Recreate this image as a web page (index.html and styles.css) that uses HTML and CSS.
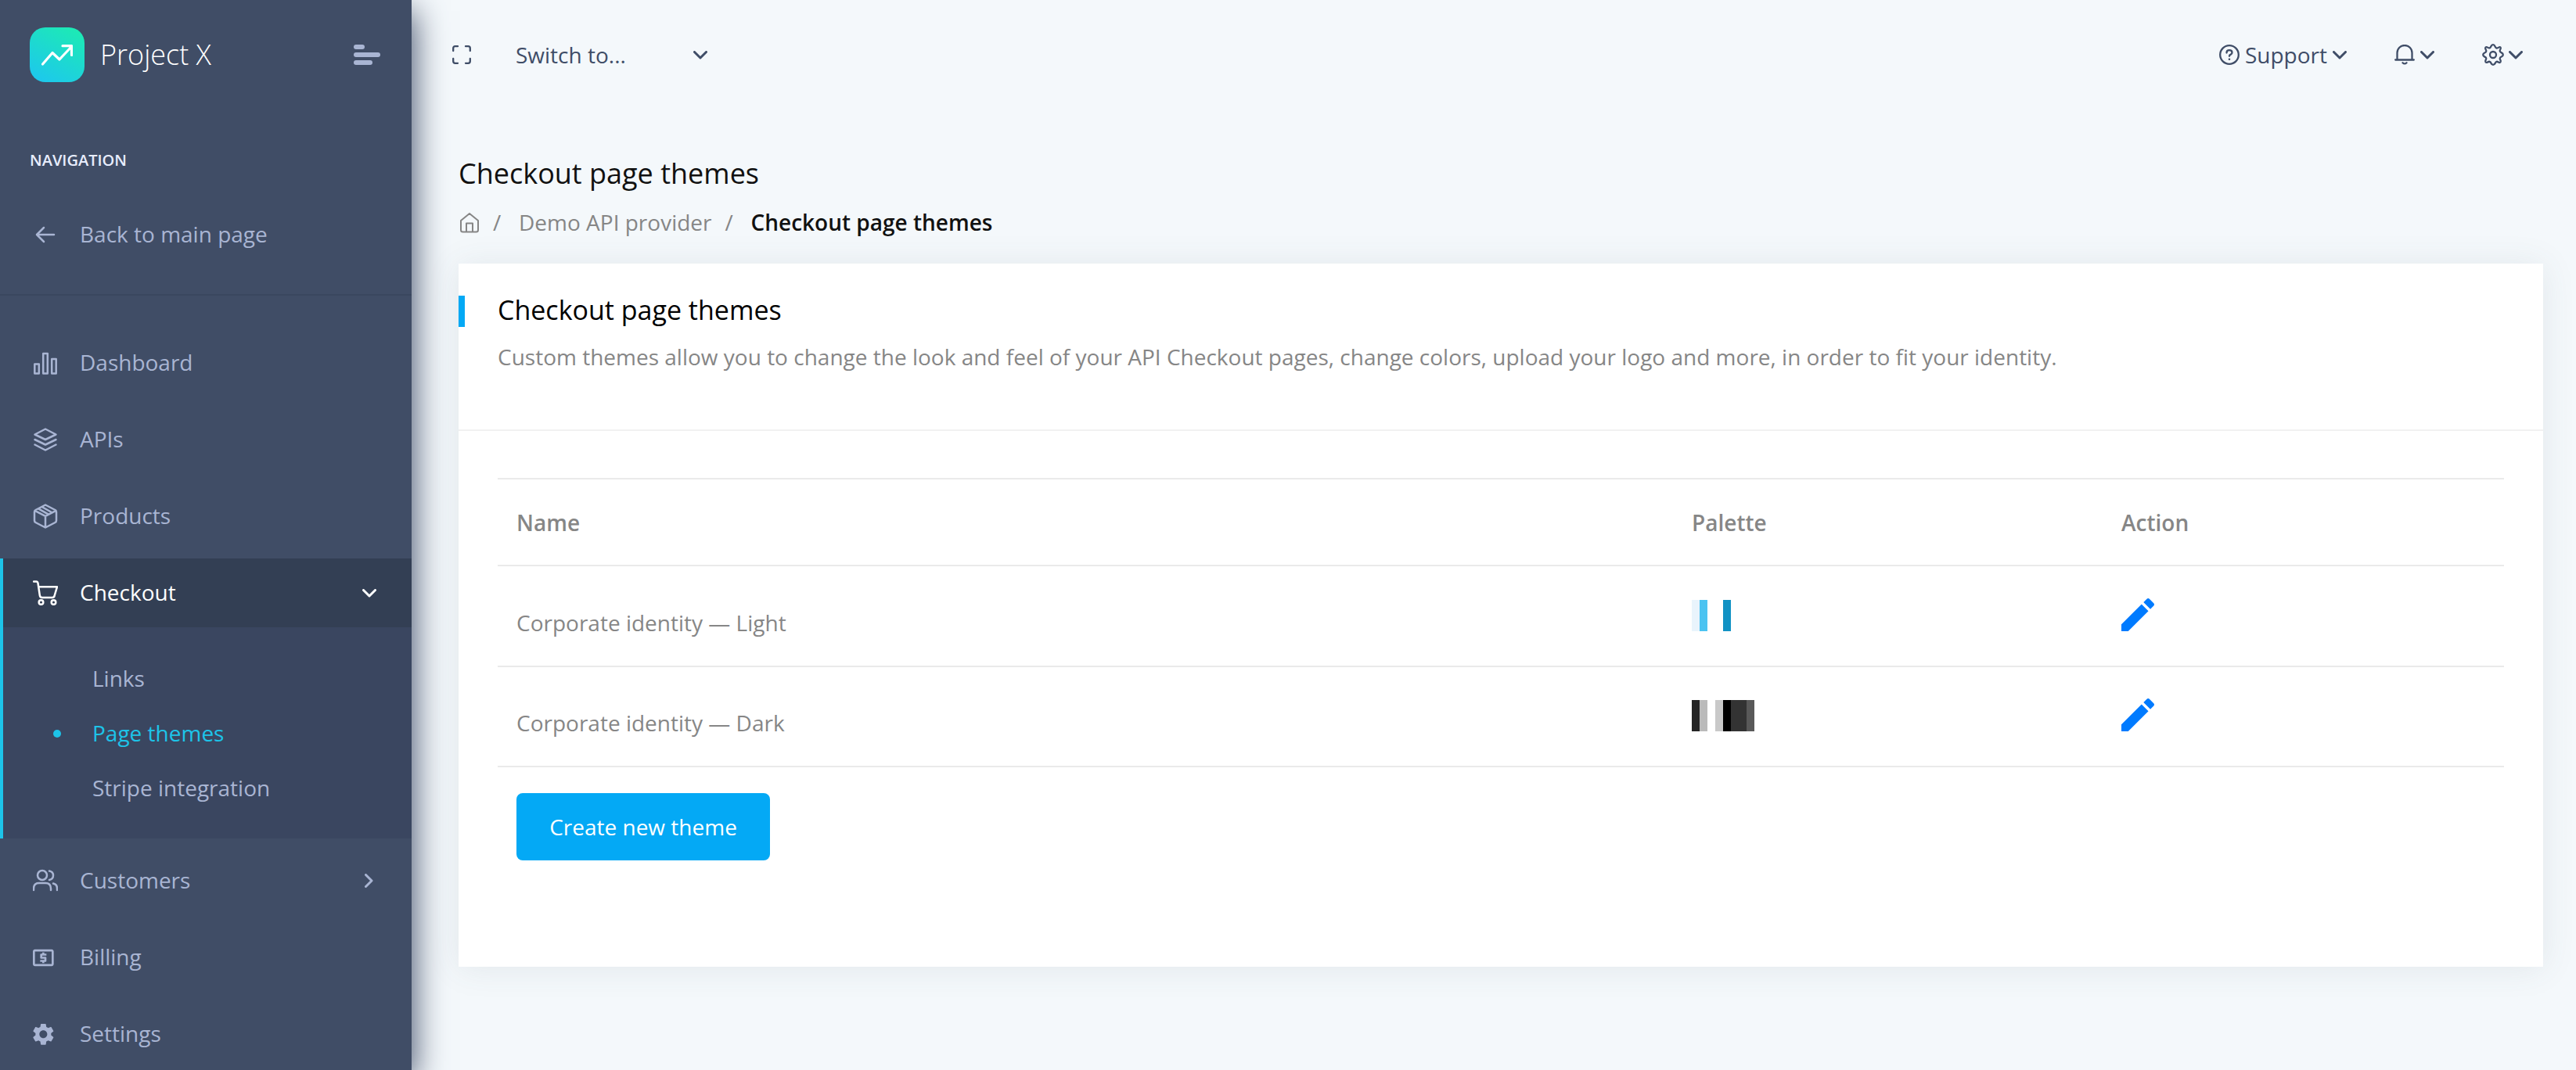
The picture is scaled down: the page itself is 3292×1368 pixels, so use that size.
FILE: index.html
```html
<!DOCTYPE html>
<html lang="en">
<head>
<meta charset="utf-8">
<title>Checkout page themes</title>
<link rel="stylesheet" href="styles.css">
</head>
<body>
<div class="app">
  <aside class="sidebar">
    <div class="brand">
      <span class="logo"><svg width="40" height="27" viewBox="0 0 40 27"><path d="M1.5 25 14 10.500l9 8.500L38 3M27 1.700h11.500V13.500" /></svg></span>
      <span class="brand-name">Project X</span>
      <span class="burger"><i></i><i></i><i></i></span>
    </div>
    <div class="nav-title">NAVIGATION</div>
    <a class="item back"><span class="ico"><svg width="32" height="32" viewBox="0 0 32 32"><path d="M5 16h22M14 7l-9 9 9 9"/></svg></span><span class="label">Back to main page</span></a>
    <nav class="menu">
      <a class="item"><span class="ico"><svg width="32" height="32" viewBox="0 0 32 32"><path d="M2.300 17.500h5.500v12H2.300zM13.200 4h5.600v25.500h-5.600zM24.200 11h5.500v18.500h-5.500z"/></svg></span><span class="label">Dashboard</span></a>
      <a class="item"><span class="ico"><svg width="32" height="32" viewBox="0 0 32 32"><path d="M16 2.500 29.500 9.500 16 16 2.500 9.500zM2.500 16 16 22.500 29.500 16M2.500 22.500 16 29.500l13.500-7"/></svg></span><span class="label">APIs</span></a>
      <a class="item"><span class="ico"><svg width="32" height="32" viewBox="0 0 32 32"><path d="M16 1.500 28.500 8q1.500.8 1.500 2.500v11q0 1.700-1.500 2.500L16 30.500 3.500 24Q2 23.200 2 21.500v-11Q2 8.800 3.500 8zM2.500 8.800 16 15.800l13.500-7M16 15.800v14.500M7 6.300l12.500 7M11.500 4l12.500 7"/></svg></span><span class="label">Products</span></a>
      <div class="group">
        <a class="item active"><span class="ico"><svg width="32" height="32" viewBox="0 0 32 32"><path d="M1 1.500h3.500q1.500 0 2 2l2.300 15.500q.4 3 3 3h13q2.600 0 3-3L31 8.300H7.300"/><circle cx="10.500" cy="28" r="2.800"/><circle cx="26.500" cy="28" r="2.800"/></svg></span><span class="label">Checkout</span><svg class="chev" width="18" height="11" viewBox="0 0 18 11"><path d="M1.500 1.500 9 9l7.500-7.500"/></svg></a>
        <div class="sub">
          <a class="subitem">Links</a>
          <a class="subitem current">Page themes</a>
          <a class="subitem">Stripe integration</a>
        </div>
      </div>
      <a class="item"><span class="ico"><svg width="32" height="32" viewBox="0 0 32 32"><circle cx="12" cy="9" r="6"/><path d="M1 28v-2q0-7 7-7h8q7 0 7 7v2M21 3.500q5 1 5 5.700T21 15M26 19.500q5 1 5 6.500v2"/></svg></span><span class="label">Customers</span><svg class="chev side" width="11" height="18" viewBox="0 0 11 18"><path d="M1.500 1.500 9 9l-7.500 7.500"/></svg></a>
      <a class="item"><span class="ico"><svg class="solid" width="32" height="32" viewBox="2 -.35 24 24"><path d="M11 17h2v-1h1c.55 0 1-.45 1-1v-3c0-.55-.45-1-1-1h-3v-1h4V8h-2V7h-2v1h-1c-.55 0-1 .45-1 1v3c0 .55.45 1 1 1h3v1H9v2h2v1zm9-13H4c-1.110 0-1.990.89-1.990 2L2 18c0 1.110.89 2 2 2h16c1.110 0 2-.89 2-2V6c0-1.110-.89-2-2-2zm0 14H4V6h16v12z"/></svg></span><span class="label">Billing</span></a>
      <a class="item"><span class="ico"><svg class="solid" width="32" height="32" viewBox="2.400 .3 23 23"><path d="M19.140 12.940c.04-.3.060-.61.060-.94 0-.32-.02-.64-.07-.94l2.030-1.580c.18-.14.230-.41.120-.61l-1.920-3.320c-.12-.22-.37-.29-.59-.22l-2.390.96c-.5-.38-1.030-.7-1.620-.94l-.36-2.540c-.04-.24-.24-.41-.48-.41h-3.840c-.24 0-.43.17-.47.41l-.36 2.540c-.59.24-1.130.57-1.620.94l-2.390-.96c-.22-.08-.47 0-.59.22L2.740 8.870c-.12.210-.08.470.12.610l2.030 1.580c-.05.3-.09.63-.09.940s.02.64.07.940l-2.030 1.580c-.18.14-.23.41-.12.610l1.920 3.320c.12.220.37.290.59.220l2.390-.96c.5.380 1.030.7 1.620.940l.36 2.540c.05.240.24.410.48.410h3.840c.24 0 .44-.17.470-.41l.36-2.540c.59-.24 1.130-.56 1.620-.94l2.390.96c.22.080.47 0 .59-.22l1.920-3.320c.12-.22.070-.47-.12-.61l-2.010-1.580zM12 15.600c-1.980 0-3.600-1.620-3.600-3.600s1.620-3.600 3.600-3.600 3.600 1.620 3.600 3.600-1.620 3.600-3.600 3.600z"/></svg></span><span class="label">Settings</span></a>
    </nav>
  </aside>
  <div class="page">
    <header class="topbar">
      <svg class="expand" width="24" height="24" viewBox="0 0 24 24"><path d="M1.200 7V3.700Q1.200 1.200 3.700 1.200H7M17 1.200h3.300q2.500 0 2.500 2.500V7M22.800 17v3.300q0 2.500-2.500 2.500H17M7 22.800H3.700q-2.500 0-2.500-2.500V17"/></svg>
      <span class="switch">Switch to...</span>
      <svg class="chev" width="18" height="11" viewBox="0 0 18 11"><path d="M1.500 1.500 9 9l7.500-7.500"/></svg>
      <div class="tools">
        <span class="tool"><svg class="help" width="26" height="26" viewBox="0 0 26 26"><circle cx="13" cy="13" r="11.800"/><path d="M9.500 10.500q0-3.300 3.500-3.300t3.500 3q0 1.600-1.700 2.400-1.800.8-1.800 2.200"/><circle class="dot" cx="13" cy="18.800" r="1.300"/></svg><span class="tool-text">Support</span><svg class="chev" width="18" height="11" viewBox="0 0 18 11"><path d="M1.500 1.500 9 9l7.500-7.500"/></svg></span>
        <span class="tool alerts"><svg class="bell" width="26" height="26" viewBox="0 0 26 26"><path d="M1.200 19.500h23.600M3.500 19.500V10.500a9.500 9.500 0 0 1 19 0v9M10.500 23.200q2.500 2.500 5 0"/></svg><svg class="chev" width="18" height="11" viewBox="0 0 18 11"><path d="M1.500 1.500 9 9l7.500-7.500"/></svg></span>
        <span class="tool prefs"><svg class="gear" width="28" height="28" viewBox="0 0 28 28"><path d="M14 1.200c3 0 2 3.800 4.500 4.300S22 2.800 23.500 4.500 22 7.500 22.800 9.700s4 1.300 4 4.300-3.300 2-4 4.300 2.400 3.500.7 5.200-3-1.200-5-.7-1.500 4-4.500 4-2-3.400-4.300-4-3.500 2.400-5.200.7 1.300-3 .7-5.200-4-1.300-4-4.300 3.400-2 4-4.300-2.400-3.500-.7-5.200 3 1.500 5.200.8S11 1.200 14 1.200z"/><circle cx="14" cy="14" r="4"/></svg><svg class="chev" width="18" height="11" viewBox="0 0 18 11"><path d="M1.500 1.500 9 9l7.500-7.500"/></svg></span>
      </div>
    </header>
    <main class="content">
      <h1 class="title">Checkout page themes</h1>
      <div class="crumbs">
        <svg class="home" width="26" height="27" viewBox="0 0 26 27"><path d="M2 11 13 2l11 9v12q0 2.500-2.500 2.500h-17Q2 25.500 2 23zM9 25.500V14.500h8v11"/></svg>
        <span class="slash">/</span><span class="crumb">Demo API provider</span><span class="slash">/</span><span class="here">Checkout page themes</span>
      </div>
      <section class="card">
        <div class="card-head">
          <h2 class="card-title">Checkout page themes</h2>
          <p class="card-text">Custom themes allow you to change the look and feel of your API Checkout pages, change colors, upload your logo and more, in order to fit your identity.</p>
        </div>
        <div class="table">
          <div class="row head"><span>Name</span><span>Palette</span><span>Action</span></div>
          <div class="row">
            <span class="name">Corporate identity — Light</span>
            <span class="palette"><i class="l1"></i><i class="l2"></i><i class="l3"></i><i class="l3"></i><i class="l4"></i></span>
            <svg class="pencil" width="42" height="42" viewBox="3 3 18 18"><path d="M3 17.250V21h3.750L17.810 9.940l-3.750-3.750L3 17.250zM20.710 7.040c.39-.39.39-1.020 0-1.410l-2.340-2.340c-.39-.39-1.020-.39-1.410 0l-1.830 1.830 3.750 3.750 1.830-1.830z"/></svg>
          </div>
          <div class="row">
            <span class="name">Corporate identity — Dark</span>
            <span class="palette"><i class="d1"></i><i class="d2"></i><i class="l3"></i><i class="d3"></i><i class="d4"></i><i class="d5"></i><i class="d5"></i><i class="d6"></i></span>
            <svg class="pencil" width="42" height="42" viewBox="3 3 18 18"><path d="M3 17.250V21h3.750L17.810 9.940l-3.750-3.750L3 17.250zM20.710 7.040c.39-.39.39-1.020 0-1.410l-2.340-2.340c-.39-.39-1.020-.39-1.410 0l-1.830 1.830 3.750 3.750 1.830-1.830z"/></svg>
          </div>
        </div>
        <button class="create">Create new theme</button>
      </section>
    </main>
  </div>
</div>
</body>
</html>
```
FILE: styles.css
```css
* { box-sizing: border-box; }
body { margin: 0; background: #f4f8fb; font-family: "Open Sans", "Noto Sans", sans-serif; font-size: 28px; color: #868686; }
h1, h2, p { margin: 0; font-weight: 400; }
svg { display: block; flex: none; fill: none; stroke: currentColor; stroke-width: 2.5; stroke-linecap: round; stroke-linejoin: round; }
.app { display: flex; height: 1368px; overflow: hidden; }

.sidebar { width: 526px; flex: none; background: #404d66; color: #a9b5d3; box-shadow: 2px 14px 40px 0 #3f4d67; position: relative; z-index: 1; }
.brand { display: flex; align-items: center; height: 140px; padding: 0 40px 0 38px; }
.logo { width: 70px; height: 70px; border-radius: 20px; background: linear-gradient(30deg, #1dc9eb 10%, #1de9b6 90%); display: flex; align-items: center; justify-content: center; color: #fff; }
.logo svg { stroke-width: 3.2; }
.brand-name { margin-left: 20px; font-size: 36px; font-weight: 300; color: #fff; line-height: 50px; }
.burger { margin-left: auto; width: 34px; display: grid; gap: 4px; }
.burger i { height: 6px; border-radius: 3px; background: #a9b5d3; }
.burger i:first-child { width: 14px; }
.burger i:last-child { width: 24px; }
.nav-title { height: 116px; padding: 51px 38px 0; font-size: 20px; font-weight: 600; line-height: 28px; color: #e8edfd; }
.item { display: flex; align-items: center; height: 88px; margin-bottom: 10px; padding-left: 42px; }
.item .ico { width: 60px; flex: none; }
.label { padding-bottom: 2px; }
.item .chev { margin-left: auto; margin-right: 45px; stroke-width: 3; }
.item .side { margin-right: 49px; }
.item .solid, .pencil { fill: currentColor; stroke: none; }
.back { margin-bottom: 32px; }
.menu { border-top: 2px solid #3a475f; padding-top: 42px; }
.group { border-left: 4px solid #1dc4e9; margin-bottom: 10px; background: #3a4660; }
.group .item { padding-left: 38px; margin: 0; }
.active { background: #333f54; color: #fff; }
.sub { padding: 30px 0; }
.subitem { display: flex; align-items: center; height: 70px; padding-left: 114px; }
.current { color: #1dc4e9; padding-left: 64px; }
.current::before { content: ""; width: 10px; height: 10px; border-radius: 5px; background: #1dc4e9; margin: 2px 40px 0 0; }

.page { flex: 1; min-width: 0; }
.topbar { display: flex; align-items: center; height: 140px; padding-left: 52px; color: #3f4d67; }
.topbar svg { stroke-width: 2.3; }
.topbar .chev { stroke-width: 3; }
.help .dot { fill: currentColor; stroke: none; }
.switch { width: 227px; margin-left: 57px; }
.tools { margin-left: auto; display: flex; gap: 61px; padding-right: 68px; }
.tool { display: flex; align-items: center; gap: 7px; }
.prefs { gap: 6px; }
.tool-text { line-height: 38px; }

.content { padding: 56px 42px 0 60px; }
.title { font-size: 36px; line-height: 52px; color: #111; }
.crumbs { display: flex; align-items: center; height: 38px; margin: 17px 0 34px; }
.home { stroke-width: 2; margin-left: 1px; }
.slash { margin-left: 17px; width: 33px; }
.here { font-weight: 600; color: #111; }
.card { height: 899px; background: #fff; box-shadow: 0 2px 40px 0 rgba(69, 90, 100, .1); }
.card-head { height: 214px; padding: 34px 50px 0; border-bottom: 2px solid #f1f1f1; }
.card-title { font-size: 34px; line-height: 50px; color: #000; }
.card-title::before { content: ""; float: left; width: 8px; height: 40px; margin: 7px 0 0 -50px; background: #04a9f5; }
.card-text { margin-top: 16px; line-height: 38px; white-space: nowrap; }
.table { margin: 60px 50px 0; border-top: 2px solid #eaeaea; }
.row { display: grid; grid-template-columns: 1502px 549px 1fr; height: 129px; padding: 0 24px; border-bottom: 2px solid #eaeaea; align-items: start; }
.row:last-child { margin-top: -1px; }
.row.head { height: 111px; align-items: center; font-weight: 600; }
.name { padding-top: 53px; line-height: 38px; }
.palette { display: flex; margin-top: 43px; }
.palette i { width: 10px; height: 40px; }
.l1 { background: #e9f4fc; } .l2 { background: #4bc3f1; } .l3 { background: #fff; } .l4 { background: #1192c4; }
.d1 { background: #252525; } .d2 { background: #bababa; } .d3 { background: #c9c9c9; } .d4 { background: #000; } .d5 { background: #333; } .d6 { background: #595959; }
.pencil { color: #007bff; margin-top: 41px; }
.create { display: block; width: 324px; height: 86px; margin: 33px 0 0 74px; padding: 0; border: 0; border-radius: 8px; background: #04a9f5; color: #fff; font: inherit; }
```
